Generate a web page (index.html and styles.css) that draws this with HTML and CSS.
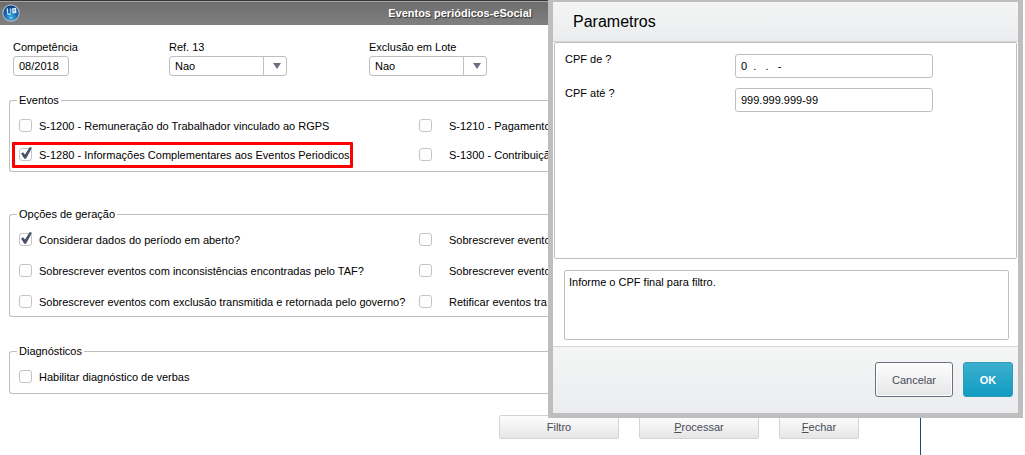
FILE: index.html
```html
<!DOCTYPE html>
<html lang="pt-BR">
  <head>
    <meta charset="UTF-8" />
    <meta name="viewport" content="width=device-width, initial-scale=1.0" />
    <title>Eventos periódicos-eSocial</title>
    <link rel="stylesheet" href="styles.css">
  </head>
  <body>
    <main class="window">
      <header class="titlebar">
        <svg class="logo" viewBox="0 0 18 18" aria-hidden="true">
          <defs>
            <radialGradient id="ball" cx="50%" cy="80%" r="75%">
              <stop offset="0" stop-color="#3fb4ea" />
              <stop offset="0.5" stop-color="#1a6fb4" />
              <stop offset="1" stop-color="#0d4484" />
            </radialGradient>
          </defs>
          <circle cx="9" cy="9" r="8.7" fill="#a9b4bd" />
          <circle cx="9" cy="9" r="7.600" fill="url(#ball)" />
          <path d="M4.500 4.500h1.500v5h3v1.300H5.500z" fill="#d9edf9" />
          <path d="M8 4.500h1.200v4H8z" fill="#a8d3ee" />
          <path d="M10 4.500l4-.7.5 5.200-4 .6z" fill="#d9edf9" />
          <path d="M11.200 5.500h1.600v1.800h-1.600z" fill="#4f97cb" />
          <circle cx="9" cy="14" r="1" fill="#8fd0f2" />
        </svg>
        <h1>Eventos periódicos-eSocial</h1>
      </header>

      <form class="form">
        <div class="filters">
          <div class="field">
            <label for="competencia">Competência</label>
            <input class="box month" type="text" id="competencia" value="08/2018" />
          </div>
          <div class="field">
            <label for="ref13">Ref. 13</label>
            <div class="select">
              <select class="box" id="ref13"><option>Nao</option></select>
            </div>
          </div>
          <div class="field">
            <label for="lote">Exclusão em Lote</label>
            <div class="select">
              <select class="box" id="lote"><option>Nao</option></select>
            </div>
          </div>
        </div>

        <fieldset class="group events">
          <legend>Eventos</legend>
          <div class="checks">
            <label class="check"><input type="checkbox" />S-1200 - Remuneração do Trabalhador vinculado ao RGPS</label>
            <label class="check wide"><input type="checkbox" />S-1210 - Pagamentos</label>
            <label class="check highlight"><input type="checkbox" checked />S-1280 - Informações Complementares aos Eventos Periodicos</label>
            <label class="check wide"><input type="checkbox" />S-1300 - Contribuição</label>
          </div>
        </fieldset>

        <fieldset class="group options">
          <legend>Opções de geração</legend>
          <div class="checks">
            <label class="check"><input type="checkbox" checked />Considerar dados do período em aberto?</label>
            <label class="check wide"><input type="checkbox" />Sobrescrever eventos</label>
            <label class="check"><input type="checkbox" />Sobrescrever eventos com inconsistências encontradas pelo TAF?</label>
            <label class="check wide"><input type="checkbox" />Sobrescrever eventos</label>
            <label class="check"><input type="checkbox" />Sobrescrever eventos com exclusão transmitida e retornada pelo governo?</label>
            <label class="check wide"><input type="checkbox" />Retificar eventos tra</label>
          </div>
        </fieldset>

        <fieldset class="group">
          <legend>Diagnósticos</legend>
          <div class="checks">
            <label class="check"><input type="checkbox" />Habilitar diagnóstico de verbas</label>
          </div>
        </fieldset>

        <div class="actions">
          <button class="btn" type="button">Filtro</button>
          <button class="btn" type="button"><u>P</u>rocessar</button>
          <button class="btn small" type="button"><u>F</u>echar</button>
        </div>
      </form>
    </main>

    <section class="dialog" role="dialog" aria-labelledby="dialog-title">
      <h2 id="dialog-title">Parametros</h2>
      <div class="params">
        <label for="cpf-de">CPF de ?</label>
        <input class="box" type="text" id="cpf-de" value="0  .   .   -" />
        <label for="cpf-ate">CPF até ?</label>
        <input class="box" type="text" id="cpf-ate" value="999.999.999-99" />
      </div>
      <textarea class="help" aria-label="Ajuda" readonly>Informe o CPF final para filtro.</textarea>
      <footer class="dialog-footer">
        <button class="cancel" type="button">Cancelar</button>
        <button class="ok" type="button">OK</button>
      </footer>
    </section>
  </body>
</html>
```
FILE: styles.css
```css
* {
  box-sizing: border-box;
}

body {
  margin: 0;
  background: #fff;
  color: #000;
  font-family: "Liberation Sans", Arial, sans-serif;
  font-size: 11px;
  line-height: 14px;
  overflow: hidden;
}

input,
select,
textarea,
button {
  margin: 0;
  font: inherit;
  color: inherit;
}

.window {
  margin-right: 104px;
  min-height: 100vh;
  border-right: 1px solid #1c4a7c;
}

.titlebar {
  position: relative;
  height: 25px;
  border-top: 1px solid #393637;
  box-shadow: inset 0 1px #a3a3a3;
  background: linear-gradient(#6c6c6c, #808080);
}

.logo {
  position: absolute;
  top: 3px;
  left: 2px;
  width: 18px;
  height: 18px;
}

.titlebar h1 {
  margin: 0;
  color: #fff;
  font-size: 11px;
  line-height: 24px;
  text-align: center;
  text-shadow: 1px 1px 1px #333;
}

.form {
  padding-left: 9px;
}

.filters {
  display: grid;
  grid-template-columns: 156px 200px 118px;
  padding: 15px 4px 0;
}

.field {
  display: flex;
  flex-direction: column;
  align-items: flex-start;
  gap: 2px;
}

.box {
  height: 20px;
  padding: 0 5px;
  border: 1px solid #bfbfbf;
  border-radius: 3px;
  background: #fff;
}

.month {
  width: 56px;
}

.select {
  position: relative;
}

.select select {
  display: block;
  width: 118px;
  appearance: none;
}

/* arrow part of the drop-down */
.select::before {
  content: "";
  position: absolute;
  top: 1px;
  bottom: 1px;
  right: 23px;
  border-left: 1px solid #bfbfbf;
}

.select::after {
  content: "";
  position: absolute;
  top: 7px;
  right: 6px;
  border: 4px solid transparent;
  border-top: 6px solid #6a7080;
  border-bottom: 0;
  pointer-events: none;
}

.group {
  margin: 0 0 27px;
  padding: 12px 9px 10px;
  border: 1px solid #bfbfbf;
  border-right: 0;
  border-radius: 3px;
}

.group legend {
  margin-left: -2px;
  padding: 0 2px;
}

.events {
  margin: 17px 0 35px;
}

.options {
  padding-bottom: 8px;
}

.checks {
  display: grid;
  grid-template-columns: 400px 1fr;
  row-gap: 16px;
}

.options .checks {
  row-gap: 18px;
}

.check {
  position: relative;
  display: flex;
  align-items: center;
  gap: 7px;
  height: 13px;
  justify-self: start;
  white-space: nowrap;
}

.check.wide {
  gap: 17px;
}

.check input {
  position: relative;
  width: 13px;
  height: 13px;
  appearance: none;
  border: 1px solid #c4c4c4;
  border-radius: 3px;
  background: #fff;
}

.check input:checked::after {
  content: "";
  position: absolute;
  top: -2px;
  left: 1px;
  width: 11px;
  height: 12px;
  background: #48536a;
  clip-path: polygon(0 54%, 18% 44%, 36% 62%, 80% 0, 100% 6%, 46% 98%, 30% 98%);
}

.highlight::after {
  content: "";
  position: absolute;
  inset: -6px -3px -7px -7px;
  border: 3px solid #f00;
  border-radius: 1px;
  pointer-events: none;
}

.actions {
  display: flex;
  justify-content: flex-end;
  gap: 20px;
  margin-top: -6px;
  padding-right: 61px;
}

.btn {
  width: 120px;
  height: 24px;
  padding: 0;
  border: 1px solid #d4d4d4;
  border-radius: 2px;
  background: linear-gradient(#fdfdfd, #e6e6e6);
  color: #474b57;
}

.btn.small {
  width: 80px;
}

.dialog {
  position: absolute;
  top: 0;
  right: 2px;
  width: 475px;
  border: 5px solid #bebebe;
  border-top-width: 2px;
  background: #fff;
}

.dialog h2 {
  margin: 0;
  padding-left: 20px;
  border-bottom: 1px solid #d4d6d6;
  background: linear-gradient(#f4f6f5, #ebecef);
  font-size: 16px;
  font-weight: normal;
  line-height: 39px;
}

.params {
  display: grid;
  grid-template-columns: 170px 198px;
  align-content: start;
  row-gap: 10px;
  min-height: 217px;
  margin: 0 1px;
  padding: 11px 10px;
  border: 1px solid #bfbfbf;
  border-radius: 2px;
}

.params label {
  line-height: 10px;
}

.params .box {
  height: 24px;
}

.help {
  display: block;
  width: calc(100% - 20px);
  height: 70px;
  margin: 11px 0 6px 11px;
  padding: 4px;
  border: 1px solid #bfbfbf;
  border-radius: 2px;
  resize: none;
}

.dialog-footer {
  display: flex;
  justify-content: flex-end;
  gap: 10px;
  padding: 15px 5px 16px;
  border-top: 1px solid #d4d6d6;
  background: linear-gradient(#f4f6f5, #ebecef);
}

.cancel,
.ok {
  height: 35px;
  padding: 0;
  border-radius: 3px;
}

.cancel {
  width: 78px;
  border: 1px solid #6a7080;
  box-shadow: inset 0 0 0 1px #fff;
  background: linear-gradient(#fdfdfd, #e6e6e6);
  color: #474b57;
}

.ok {
  width: 50px;
  border: 1px solid #2e9bb9;
  background: linear-gradient(#3cb0cf, #109cc1);
  color: #fff;
  font-weight: bold;
}
```
